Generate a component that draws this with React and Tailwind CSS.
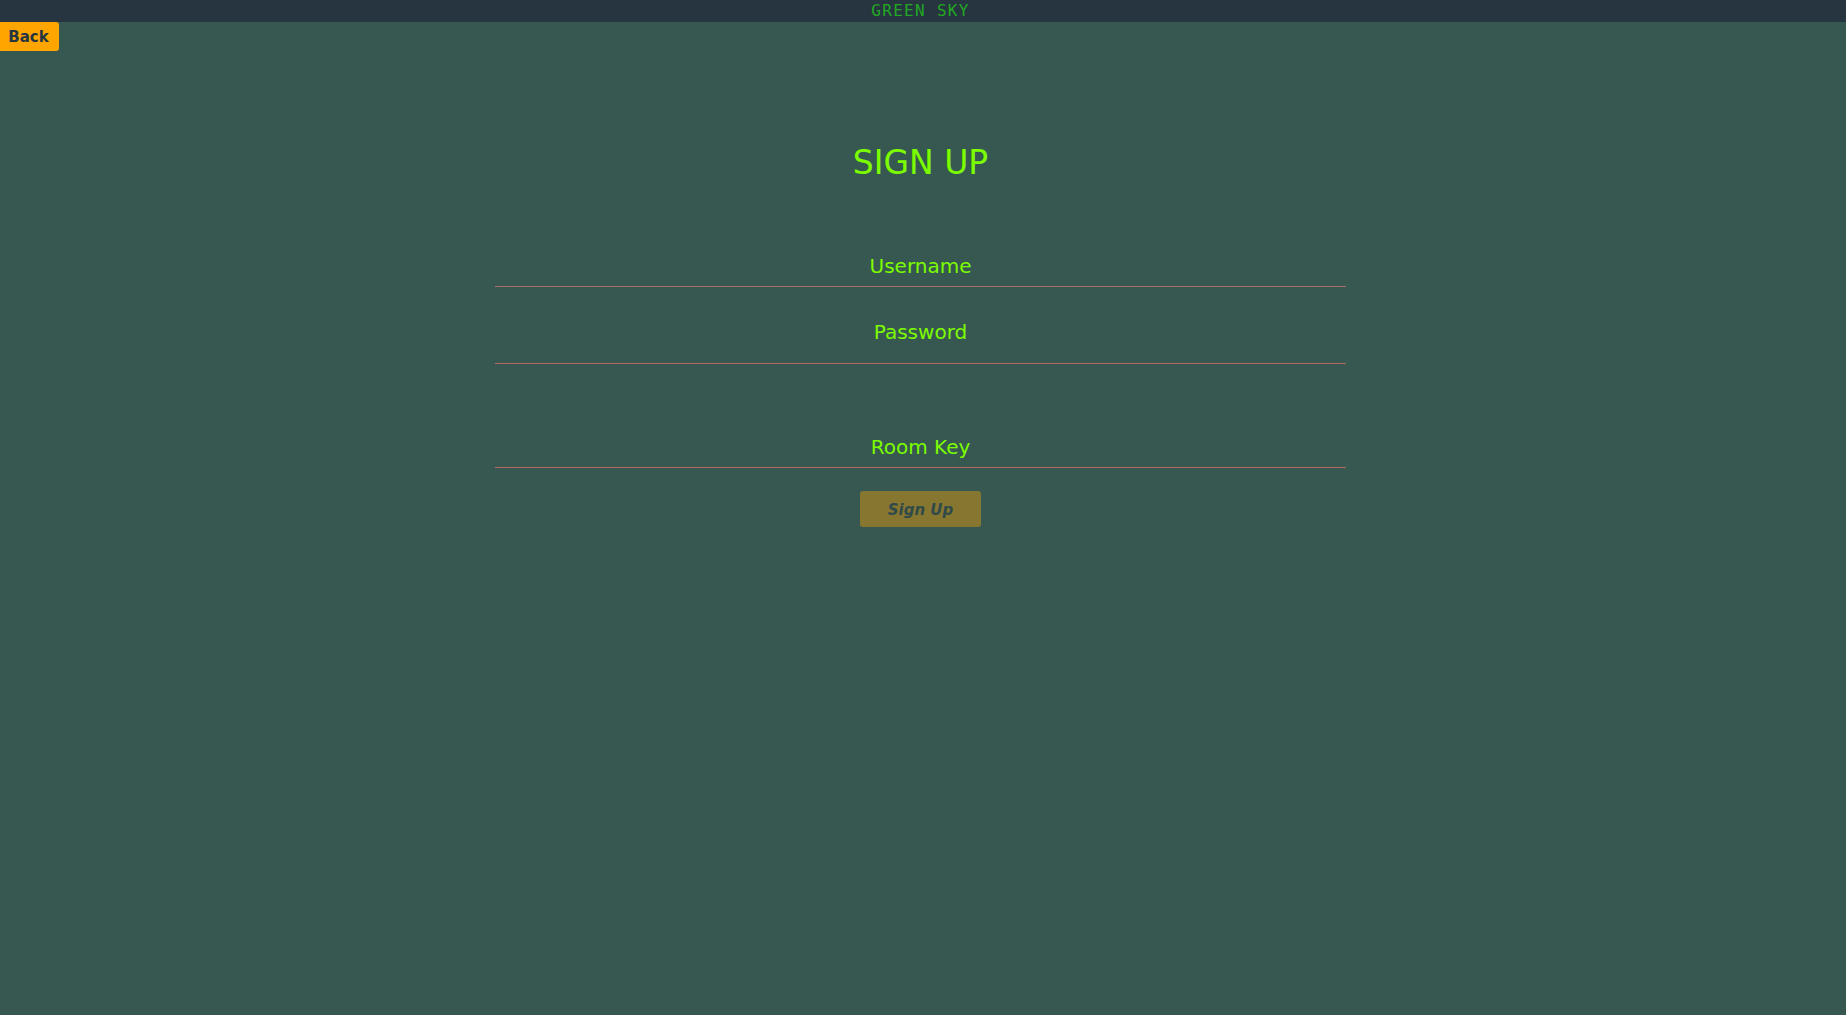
export default function App() {
  return (
    <div className="min-h-[1015px] w-full bg-[#375850] font-['DejaVu_Sans',sans-serif]">
      <header className="h-[22px] bg-[#263540] flex items-center justify-center pr-[5px]">
        <span className="font-['DejaVu_Sans_Mono',monospace] text-[16px] leading-[22px] tracking-[1.3px] text-[#22a822]">
          GREEN SKY
        </span>
      </header>

      <button className="block h-[29px] w-[59px] pt-[2px] pr-[2px] bg-[#ffa500] rounded-r-[3px] text-[15px] font-bold text-[#263540]">
        Back
      </button>

      <div className="flex flex-col items-center pr-[5px]">
        <h1 className="mt-[92px] text-[33px] leading-[40px] font-normal text-[#7cfc00]">
          SIGN UP
        </h1>

        <form className="w-[851px] mt-[64px] flex flex-col items-center">
          <input
            type="text"
            placeholder="Username"
            className="w-full h-[40px] pb-[2px] bg-transparent text-center text-[20px] text-[#7cfc00] placeholder:text-[#7cfc00] border-b border-[#a8706a] outline-none"
          />
          <input
            type="password"
            placeholder="Password"
            className="w-full h-[62px] pb-[2px] mt-[15px] bg-transparent text-center text-[20px] text-[#7cfc00] placeholder:text-[#7cfc00] border-b border-[#b06a60] outline-none"
          />
          <input
            type="text"
            placeholder="Room Key"
            className="w-full h-[40px] pb-[2px] mt-[64px] bg-transparent text-center text-[20px] text-[#7cfc00] placeholder:text-[#7cfc00] border-b border-[#b06a60] outline-none"
          />
          <button
            type="button"
            disabled
            className="mt-[23px] h-[36px] w-[121px] pt-[2px] rounded-[3px] bg-[#ffa500] opacity-40 text-[15px] font-bold italic text-[#263540]"
          >
            Sign Up
          </button>
        </form>
      </div>
    </div>
  );
}
